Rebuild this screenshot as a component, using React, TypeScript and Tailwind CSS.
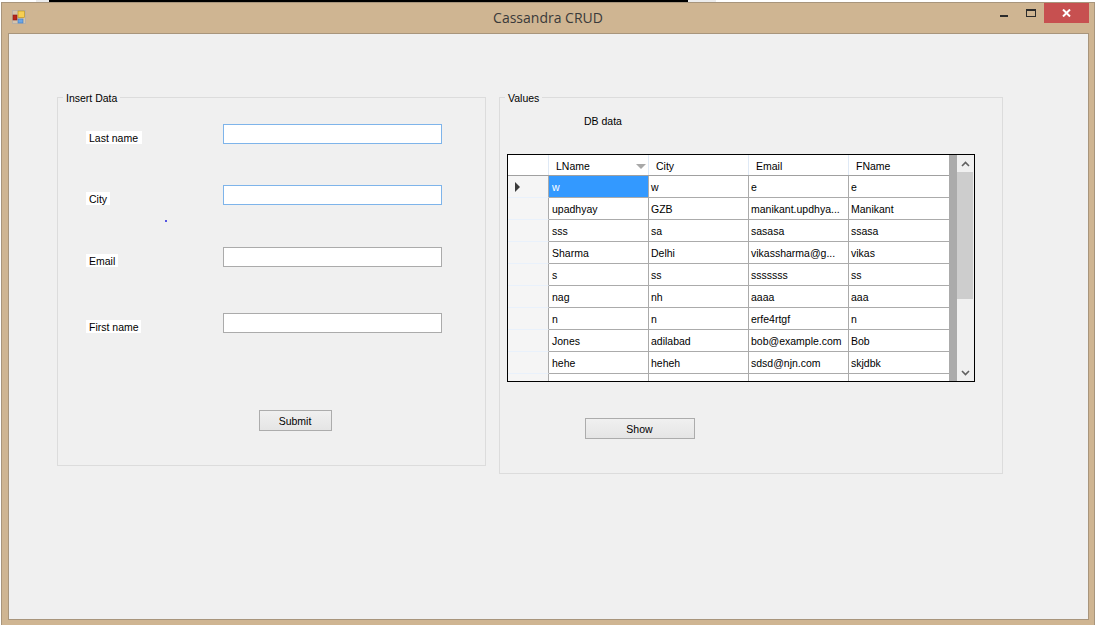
const FONT = "font-['Liberation_Sans',Arial,sans-serif]";

type Row = [string, string, string, string];
const rows: Row[] = [
  ["w", "w", "e", "e"],
  ["upadhyay", "GZB", "manikant.updhya...", "Manikant"],
  ["sss", "sa", "sasasa", "ssasa"],
  ["Sharma", "Delhi", "vikassharma@g...", "vikas"],
  ["s", "ss", "sssssss", "ss"],
  ["nag", "nh", "aaaa", "aaa"],
  ["n", "n", "erfe4rtgf", "n"],
  ["Jones", "adilabad", "bob@example.com", "Bob"],
  ["hehe", "heheh", "sdsd@njn.com", "skjdbk"],
  ["d", "", "", ""],
];

function AppIcon() {
  return (
    <svg width="14" height="14" viewBox="0 0 14 14" className="shrink-0">
      <rect x="0.5" y="0.5" width="13" height="13" fill="#d4c4ae" stroke="#b9b0a6" />
      <rect x="1" y="5" width="4" height="5" fill="#b8261c" stroke="#8a1a14" strokeWidth="0.6" />
      <rect x="6" y="1" width="6.5" height="6.5" fill="#f6cf52" stroke="#b58a17" strokeWidth="0.6" />
      <rect x="6" y="9" width="5" height="4" fill="#6aa5e6" stroke="#3f79bd" strokeWidth="0.6" />
    </svg>
  );
}

function Field({ label, labelW, focused, mt }: { label: string; labelW: string; focused?: boolean; mt: string }) {
  return (
    <div className={`flex items-end ${mt}`}>
      <div className="w-[137px] shrink-0">
        <div className={`h-[13px] ${labelW} bg-white pl-[3px] text-[10.5px] leading-[15px] text-black`}>{label}</div>
      </div>
      <div className={`h-[20px] w-[219px] border bg-white ${focused ? "border-[#7eb4ea]" : "border-[#ababab]"}`} />
    </div>
  );
}

function WinButton({ label, w }: { label: string; w: string }) {
  return (
    <div className={`flex h-[21px] ${w} items-center justify-center border border-[#acacac] bg-gradient-to-b from-[#f0f0f0] to-[#e5e5e5] pr-[1px] pt-[2px] text-[10.5px] text-black`}>
      {label}
    </div>
  );
}

export default function App() {
  return (
    <div className={`${FONT} h-[625px] w-[1100px] overflow-hidden bg-white`}>
      <div className="flex h-[2px]">
        <div className="w-[36px] bg-white" />
        <div className="w-[13px] bg-[#ececec]" />
        <div className="w-[639px] bg-black" />
        <div className="w-[28px] bg-[#ececec]" />
        <div className="flex-1 bg-white" />
      </div>
      <div className="ml-[1px] h-[623px] w-[1094px] border-x border-t border-[#a8957c] bg-[#cfb592] pl-[6px] pr-[5px]">
        <div className="relative flex h-[30px] items-start justify-center">
          <div className="absolute left-[4px] top-[7px]"><AppIcon /></div>
          <div className="mr-[1px] pt-[5px] font-['Open_Sans',sans-serif] text-[14px] leading-[19px] text-[#3a3a3a]">Cassandra CRUD</div>
          <div className="absolute right-0 top-0 flex items-start">
            <div className="mr-[18px] mt-[12px] h-[2px] w-[8px] bg-[#2b2b2b]" />
            <div className="mr-[8px] mt-[6px] h-[8px] w-[10px] border border-t-2 border-[#2b2b2b]" />
            <div className="flex h-[20px] w-[45px] items-center justify-center bg-[#c75050]">
              <svg width="9" height="8" viewBox="0 0 9 8"><path d="M1 0.5 L8 7.5 M8 0.5 L1 7.5" stroke="#fff" strokeWidth="2" /></svg>
            </div>
          </div>
        </div>
        <div className="flex h-[587px] w-[1081px] items-start gap-[13px] border border-[#a8957c] bg-[#f0f0f0] pl-[48px] pt-[63px]">
          {/* Insert Data */}
          <div className="relative h-[369px] w-[429px] border border-[#dcdcdc] pl-[28px] pt-[26px]">
            <div className="absolute left-[5px] top-[-6px] bg-[#f0f0f0] px-[3px] text-[10.5px] leading-[13px] text-black">Insert Data</div>
            <Field label="Last name" labelW="w-[56px]" focused mt="" />
            <Field label="City" labelW="w-[24px]" focused mt="mt-[41px]" />
            <Field label="Email" labelW="w-[32px]" mt="mt-[42px]" />
            <Field label="First name" labelW="w-[55px]" mt="mt-[46px]" />
            <div className="ml-[173px] mt-[77px]"><WinButton label="Submit" w="w-[73px]" /></div>
            <div className="absolute left-[107px] top-[122px] h-[2px] w-[2px] rounded-full bg-[#2222dd]" />
          </div>
          {/* Values */}
          <div className="relative h-[377px] w-[504px] border border-[#dcdcdc] pl-[7px] pt-[17px]">
            <div className="absolute left-[5px] top-[-6px] bg-[#f0f0f0] px-[3px] text-[10.5px] leading-[13px] text-black">Values</div>
            <div className="ml-[77px] h-[13px] text-[10.5px] leading-[13px] text-black">DB data</div>
            <div className="mt-[26px] flex h-[228px] w-[468px] border border-black bg-[#ababab]">
              <div className="h-full w-[449px] overflow-hidden">
                <div className="flex h-[21px] w-[441px] border-b border-[#a0a0a0] bg-white text-[10.5px] leading-[22px] text-black">
                  <div className="w-[41px] border-r border-[#dfe9f5]" />
                  <div className="relative w-[100px] border-r border-[#dfe9f5] pl-[7px]">
                    LName
                    <svg width="10" height="5" viewBox="0 0 10 5" className="absolute right-[2px] top-[9px]"><path d="M0 0 H10 L5 5 Z" fill="#a8a8a8" /></svg>
                  </div>
                  <div className="w-[100px] border-r border-[#dfe9f5] pl-[7px]">City</div>
                  <div className="w-[100px] border-r border-[#dfe9f5] pl-[7px]">Email</div>
                  <div className="w-[100px] pl-[7px]">FName</div>
                </div>
                {rows.map((r, i) => (
                  <div key={i} className="flex h-[22px] w-[441px] text-[10.5px] leading-[23px] text-black">
                    <div className="flex w-[41px] items-center border-b border-r border-b-[#e9f1fb] border-r-[#ababab] bg-[#f5f5f5] pl-[7px]">
                      {i === 0 && <svg width="5" height="10" viewBox="0 0 5 10"><path d="M0 0 L5 5 L0 10 Z" fill="#3a3a3a" /></svg>}
                    </div>
                    {r.map((c, j) => (
                      <div
                        key={j}
                        className={`w-[100px] overflow-hidden whitespace-nowrap border-b border-r border-[#ababab] ${j === 0 ? "pl-[3px]" : "pl-[2px]"} ${
                          i === 0 && j === 0 ? "bg-[#3399ff] text-white" : "bg-white"
                        } ${j === 3 ? "border-r-0" : ""}`}
                      >
                        {c}
                      </div>
                    ))}
                  </div>
                ))}
              </div>
              <div className="flex w-[17px] flex-col bg-[#f0f0f0]">
                <div className="flex h-[17px] items-center justify-center">
                  <svg width="9" height="6" viewBox="0 0 9 6"><path d="M1 5 L4.5 1.5 L8 5" fill="none" stroke="#606060" strokeWidth="1.6" /></svg>
                </div>
                <div className="mr-[1px] h-[127px] bg-[#cdcdcd]" />
                <div className="flex-1" />
                <div className="flex h-[17px] items-center justify-center">
                  <svg width="9" height="6" viewBox="0 0 9 6"><path d="M1 1 L4.5 4.5 L8 1" fill="none" stroke="#606060" strokeWidth="1.6" /></svg>
                </div>
              </div>
            </div>
            <div className="ml-[78px] mt-[36px]"><WinButton label="Show" w="w-[110px]" /></div>
          </div>
        </div>
      </div>
    </div>
  );
}
